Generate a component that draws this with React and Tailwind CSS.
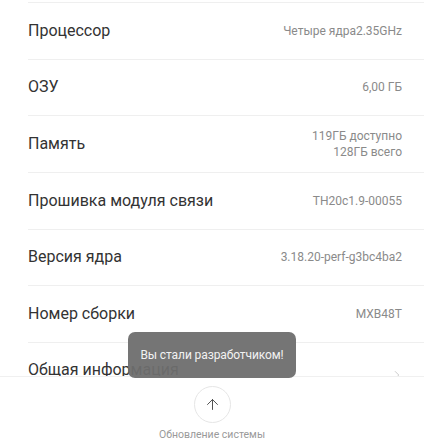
import { ArrowUp, ChevronRight } from "lucide-react";

const rows = [
  { label: "Процессор", value: ["Четыре ядра2.35GHz"] },
  { label: "ОЗУ", value: ["6,00 ГБ"] },
  { label: "Память", value: ["119ГБ доступно", "128ГБ всего"] },
  { label: "Прошивка модуля связи", value: ["TH20c1.9-00055"] },
  { label: "Версия ядра", value: ["3.18.20-perf-g3bc4ba2"] },
  { label: "Номер сборки", value: ["MXB48T"] },
];

export default function App() {
  return (
    <div className="relative flex h-[443px] w-[424px] flex-col overflow-hidden bg-white font-['Roboto',sans-serif]">
      {/* list */}
      <div className="h-[377px] overflow-hidden pt-[2px]">
        {rows.map((r) => (
          <div key={r.label} className="ml-[28px] flex h-[56.67px] items-center justify-between border-t border-[#efefef] pr-[22px]">
            <span className="text-[16px] text-[#333333]">{r.label}</span>
            <div className="flex flex-col items-end text-[12px] leading-[16px] text-[#8a8a8a]">
              {r.value.map((v) => (
                <span key={v}>{v}</span>
              ))}
            </div>
          </div>
        ))}
        <div className="ml-[28px] flex h-[56.67px] items-center justify-between border-t border-[#efefef] pr-[20px]">
          <span className="mt-[-2px] text-[16px] text-[#333333]">Общая информация</span>
          <ChevronRight className="mt-[8px] h-[14px] w-[14px] text-[#c4c4c4]" strokeWidth={1.5} />
        </div>
      </div>

      {/* bottom bar */}
      <div className="flex flex-1 flex-col items-center border-t border-[#f0f0f0] pt-[9px]">
        <div className="flex h-[37px] w-[37px] items-center justify-center rounded-full border border-[#e6e6e6]">
          <ArrowUp className="h-[17px] w-[17px] text-[#444444]" strokeWidth={1.3} />
        </div>
        <span className="mt-[4px] text-[10.5px] text-[#9a9a9a]">Обновление системы</span>
      </div>

      {/* toast */}
      <div className="absolute left-[128px] top-[332px] flex h-[46px] w-[168px] items-center justify-center rounded-[7px] bg-[#6e6e6e]/95">
        <span className="text-[12px] tracking-[-0.1px] text-[#f2f2f2]">Вы стали разработчиком!</span>
      </div>
    </div>
  );
}
